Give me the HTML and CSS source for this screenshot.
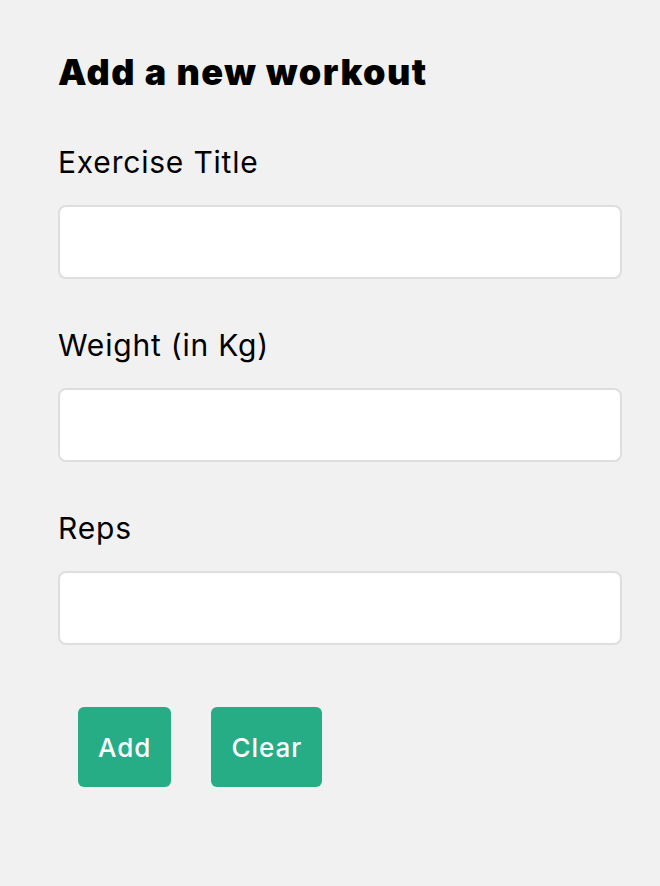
FILE: index.html
```html
<!DOCTYPE html>
<html lang="en">
<head>
<meta charset="utf-8">
<title>Add a new workout</title>
<link rel="stylesheet" href="styles.css">
</head>
<body>
<form class="create">
  <h3 class="title">Add a new workout</h3>
  <label class="label">Exercise Title</label>
  <input class="field" type="text">
  <label class="label">Weight (in Kg)</label>
  <input class="field" type="number">
  <label class="label">Reps</label>
  <input class="field" type="number">
  <div class="actions">
    <button class="btn" type="button">Add</button>
    <button class="btn" type="button">Clear</button>
  </div>
</form>
</body>
</html>
```
FILE: styles.css
```css
html, body {
  margin: 0;
  padding: 0;
  background: #f1f1f1;
}

body {
  font-family: Inter, "Noto Sans", sans-serif;
  color: #000;
}

.create {
  padding: 46px 38px 0 58px;
}

.title {
  margin: 0 0 44px;
  font-size: 36px;
  line-height: 52px;
  font-weight: 900;
  letter-spacing: 1.5px;
}

.label {
  display: block;
  font-size: 30px;
  line-height: 40px;
  font-weight: 400;
  letter-spacing: 0.8px;
}

.field {
  display: block;
  box-sizing: border-box;
  width: 100%;
  height: 74px;
  margin: 23px 0 46px;
  border: 2px solid #dedede;
  border-radius: 8px;
  background: #fff;
  padding: 0 16px;
  font-size: 24px;
}

.actions {
  display: flex;
  gap: 40px;
  padding: 16px 20px 0;
}

.btn {
  height: 80px;
  padding: 0 20px;
  border: 0;
  border-radius: 6px;
  background: #27ad86;
  color: #fff;
  font-family: Inter, "Noto Sans", sans-serif;
  font-size: 26px;
  font-weight: 500;
  letter-spacing: 1px;
}
```
